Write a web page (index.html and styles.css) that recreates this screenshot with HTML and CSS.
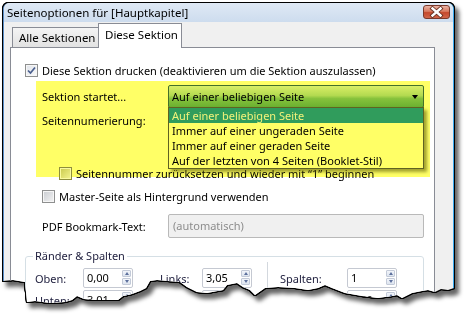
FILE: index.html
```html
<!DOCTYPE html>
<html lang="de">
<head>
    <meta charset="UTF-8">
    <title>Seitenoptionen</title>
    <link rel="stylesheet" href="styles.css">
</head>
<body>
    <div class="shot">
        <div class="window">
            <!-- Titelleiste -->
            <div class="titlebar">
                <span class="title">Seitenoptionen für [Hauptkapitel]</span>
                <span class="close">
                    <svg width="27" height="14" viewBox="0 0 27 14">
                        <path d="M9.5 3.5 L17.5 10.5 M17.5 3.5 L9.5 10.5" stroke="#6a3324" stroke-width="4.2" stroke-linecap="square" fill="none"/>
                        <path d="M9.5 3.5 L17.5 10.5 M17.5 3.5 L9.5 10.5" stroke="#fff" stroke-width="2.4" stroke-linecap="square" fill="none"/>
                    </svg>
                </span>
            </div>

            <div class="client">
                <div class="tabs">
                    <div class="tab">Alle Sektionen</div>
                    <div class="tab active">Diese Sektion</div>
                </div>

                <div class="panel">
                    <label class="check">
                        <span class="box checked">
                            <svg width="11" height="11" viewBox="0 0 11 11"><path d="M2 5.5 L4.5 8 L9 2.5" stroke="#4a5f8e" stroke-width="1.7" fill="none"/></svg>
                        </span>
                        Diese Sektion drucken (deaktivieren um die Sektion auszulassen)
                    </label>

                    <!-- markierter Bereich -->
                    <div class="marked">
                        <div class="row">
                            <span class="lbl">Sektion startet...</span>
                            <div class="combo">
                                Auf einer beliebigen Seite
                                <span class="arrow"></span>
                                <ul class="droplist">
                                    <li class="sel">Auf einer beliebigen Seite</li>
                                    <li>Immer auf einer ungeraden Seite</li>
                                    <li>Immer auf einer geraden Seite</li>
                                    <li>Auf der letzten von 4 Seiten (Booklet-Stil)</li>
                                </ul>
                            </div>
                        </div>
                        <div class="row">
                            <span class="lbl">Seitennumerierung:</span>
                        </div>
                        <label class="check sub reset">
                            <span class="box yellow"></span>
                            Seitennummer zurücksetzen und wieder mit “1” beginnen
                        </label>
                    </div>

                    <label class="check sub master">
                        <span class="box"></span>
                        Master-Seite als Hintergrund verwenden
                    </label>

                    <div class="row pdf">
                        <span class="lbl">PDF Bookmark-Text:</span>
                        <div class="field disabled">(automatisch)</div>
                    </div>

                    <fieldset class="group">
                        <legend>Ränder &amp; Spalten</legend>
                        <div class="grid">
                            <span>Oben:</span>
                            <div class="spin">0,00<span class="btns"><i class="up"></i><i class="down"></i></span></div>
                            <span class="c4">Links:</span>
                            <div class="spin">3,05<span class="btns"><i class="up"></i><i class="down"></i></span></div>
                            <span class="sep"></span>
                            <span class="c9">Spalten:</span>
                            <div class="spin">1<span class="btns"><i class="up"></i><i class="down"></i></span></div>

                            <span>Unten:</span>
                            <div class="spin">3,01<span class="btns"><i class="up"></i><i class="down"></i></span></div>
                            <span class="c4">Rechts:</span>
                            <div class="spin">3,05<span class="btns"><i class="up"></i><i class="down"></i></span></div>
                            <span class="c9">Abstand:</span>
                            <div class="spin">0,50<span class="btns"><i class="up"></i><i class="down"></i></span></div>
                        </div>
                    </fieldset>
                </div>
            </div>
        </div>
    </div>
</body>
</html>
```

FILE: styles.css
```css
body {
    margin: 0;
    background: #fff;
    font-family: "Noto Sans", sans-serif;
    font-size: 11px;
    color: #000;
}

/* Rahmen + Schatten um den abgerissenen Screenshot */
.shot {
    width: 451px;
    padding: 3px 0 0 3px;
    filter: drop-shadow(1px 0 0 #000) drop-shadow(-1px 0 0 #000) drop-shadow(0 1px 0 #000) drop-shadow(0 -1px 0 #000) drop-shadow(4px 5px 2px rgba(0, 0, 0, 0.6));
}

.window {
    width: 451px;
    height: 312px;
    box-sizing: border-box;
    background: #f0f0f0;
    border-left: 1px solid #5b8fc9;
    border-right: 1px solid #3aa9ee;
    border-radius: 6px 6px 0 0;
    overflow: hidden;
    clip-path: polygon(0 0, 451px 0, 451px 285px, 445px 287px, 438px 286px, 432px 289px, 425px 287px, 419px 288px,
        409px 290px, 399px 295px, 394px 292px, 389px 293px, 375px 295px, 359px 293px, 342px 290px, 329px 285px,
        322px 282px, 315px 285px, 305px 287px, 292px 285px, 275px 284px, 262px 285px, 252px 292px, 247px 287px,
        240px 284px, 234px 280px, 224px 282px, 220px 287px, 204px 290px, 194px 289px, 184px 284px, 177px 279px,
        165px 278px, 154px 277px, 147px 278px, 143px 285px, 137px 288px, 129px 291px, 120px 293px, 115px 297px,
        107px 297px, 92px 297px, 81px 296px, 74px 293px, 69px 297px, 62px 299px, 47px 300px, 32px 298px,
        24px 299px, 22px 279px, 10px 277px, 0 278px);
}

.titlebar {
    height: 19px;
    display: flex;
    align-items: center;
    padding-left: 3px;
    font-size: 11.5px;
    background: linear-gradient(#dfe9f5, #cddcee);
}

.close {
    align-self: flex-start;
    margin: 2px 3px 0 auto;
    width: 25px;
    height: 12px;
    border: 1px solid #7a3a2c;
    border-radius: 3px;
    background: linear-gradient(#eab3a4, #d7795f 45%, #c5492d 55%, #d0654a);
    display: flex;
    align-items: center;
    justify-content: center;
    overflow: hidden;
}

.close svg {
    flex: none;
}

.client {
    padding: 0 18px 0 6px;
}

/* Reiter */
.tabs {
    height: 26px;
    margin-bottom: -1px;
    display: flex;
    align-items: flex-end;
    position: relative;
    z-index: 1;
}

.tab {
    height: 19px;
    width: 79px;
    margin: 0 0 1px 2px;
    padding-left: 6px;
    border: 1px solid #898c95;
    border-bottom: none;
    border-right: none;
    background: linear-gradient(#f4f4f4, #e2e2e2);
    line-height: 19px;
    white-space: nowrap;
    font-size: 11.5px;
}

.tab.active {
    height: 24px;
    width: 76px;
    margin: 0;
    padding-left: 6px;
    border-right: 1px solid #898c95;
    background: #fff;
    line-height: 21px;
}

.panel {
    height: 300px;
    border: 1px solid #898c95;
    background: #fff;
    padding: 14px 0 0 14px;
}

.check {
    display: flex;
    align-items: center;
    height: 16px;
    white-space: nowrap;
}

.box {
    width: 11px;
    height: 11px;
    margin-right: 4px;
    border: 1px solid #8e8f8f;
    background: linear-gradient(135deg, #c9ccd1, #f3f3f3);
    box-shadow: inset 0 0 0 1px #f6f6f6;
    display: flex;
    align-items: center;
    justify-content: center;
}

.box.checked {
    background: linear-gradient(135deg, #dfe3ea, #fafafa);
}

.box.yellow {
    border-color: #8e8e3c;
    background: linear-gradient(135deg, #c9c94c, #f5f590);
    box-shadow: inset 0 0 0 1px #fafaa0;
}

.sub {
    margin-left: 17px;
}

/* gelb markierter Bereich */
.marked {
    width: 388px;
    height: 92px;
    margin: 3px 0 0 11px;
    padding: 4px 0 0 6px;
    background: #ffff66;
}

.row {
    display: flex;
    align-items: center;
    height: 23px;
}

.row + .row {
    margin-top: 1px;
}

.lbl {
    width: 126px;
    flex: none;
}

.combo {
    position: relative;
    width: 251px;
    height: 21px;
    padding-left: 3px;
    border: 1px solid #44702a;
    border-radius: 2px;
    background: linear-gradient(#d9ee66, #b3da50 45%, #86c23c 60%, #6bb030);
    line-height: 21px;
}

.arrow {
    position: absolute;
    right: 5px;
    top: 9px;
    border-left: 3.5px solid transparent;
    border-right: 3.5px solid transparent;
    border-top: 4px solid #000;
}

.droplist {
    position: absolute;
    left: -1px;
    top: 21px;
    width: 254px;
    margin: 0;
    padding: 0;
    list-style: none;
    border: 1px solid #5f6222;
    background: #ffff66;
    box-shadow: 3px 3px 3px rgba(90, 90, 0, 0.55);
    z-index: 2;
}

.droplist li {
    height: 15px;
    line-height: 15px;
    padding-left: 3px;
}

.droplist li.sel {
    background: #309c5c;
    color: #f2f27a;
}

.reset {
    margin-top: 33px;
}

.master {
    margin-top: 11px;
}

.pdf {
    height: 24px;
    margin: 10px 0 0 17px;
}

.field {
    width: 250px;
    height: 22px;
    padding-left: 4px;
    border: 1px solid #b9b9b9;
    border-radius: 2px;
    line-height: 22px;
}

.field.disabled {
    background: #f0f0f0;
    color: #8d8d8d;
}

/* Gruppe Ränder & Spalten */
.group {
    width: 388px;
    margin: 10px 0 0;
    padding: 4px 0 0 9px;
    border: 1px solid #d5dfe5;
    border-radius: 3px;
    min-inline-size: 0;
}

.group legend {
    padding: 0 2px;
    margin-left: -2px;
    line-height: 16px;
    color: #1d1d3c;
}

.grid {
    display: grid;
    grid-template-columns: 48px 50px 27px 42px 50px 15px 1px 12px 67px 50px;
    grid-auto-rows: 20px;
    row-gap: 2px;
    align-items: center;
    color: #1d1d3c;
}

.grid .c4 {
    grid-column: 4;
}

.grid .c9 {
    grid-column: 9;
}

.sep {
    grid-column: 7;
    grid-row: 1 / span 2;
    align-self: stretch;
    margin-top: -6px;
    background: #d3d8de;
}

.spin {
    position: relative;
    height: 18px;
    padding-left: 3px;
    border: 1px solid #c5c9d2;
    border-radius: 2px;
    line-height: 18px;
    color: #000;
}

.btns {
    position: absolute;
    right: 1px;
    top: 1px;
    display: flex;
    flex-direction: column;
    gap: 1px;
}

.btns i {
    width: 9px;
    height: 7px;
    border: 1px solid #c3cad8;
    box-sizing: border-box;
    border-radius: 1px;
    background: linear-gradient(#f2f5fa, #dde4ef);
    position: relative;
}

.btns i::after {
    content: "";
    position: absolute;
    left: 1.5px;
    border-left: 2.5px solid transparent;
    border-right: 2.5px solid transparent;
}

.btns .up::after {
    top: 1px;
    border-bottom: 3px solid #5c6f9c;
}

.btns .down::after {
    top: 1px;
    border-top: 3px solid #5c6f9c;
}
```
